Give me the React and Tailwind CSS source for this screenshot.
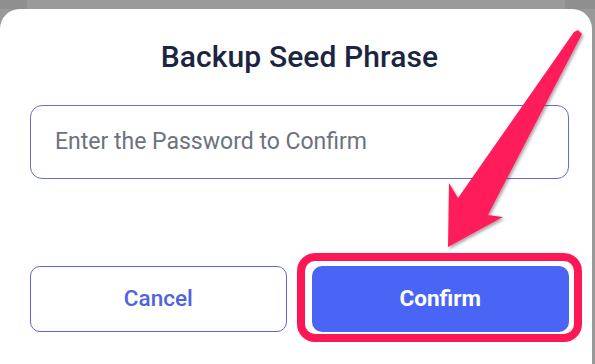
import React from "react";

export default function App() {
  return (
    <div className="relative w-[595px] h-[364px] overflow-hidden bg-[#999999]" style={{ fontFamily: "Roboto, 'Liberation Sans', sans-serif" }}>
      <div className="flex h-[9px]">
        <div className="w-[27px] bg-[#8f8f8f]" />
        <div className="flex-1 bg-[#9a9a9a]" />
        <div className="w-[30px] bg-[#8f8f8f]" />
      </div>
      <div className="w-[592px] h-[355px] bg-white rounded-t-[20px] pl-[30px] pr-[23px] flex flex-col">
        <h1 className="text-center text-[30px] font-medium text-[#1b2541] mt-[28px] leading-[40px] tracking-[0.1px]">
          Backup Seed Phrase
        </h1>
        <div className="mt-[28px] h-[74px] border border-[#666dd0] rounded-[12px] flex items-center pl-[24px]">
          <span className="text-[23px] text-[#6b7280]">Enter the Password to Confirm</span>
        </div>
        <div className="mt-[87px] flex gap-[25px]">
          <button className="w-[257px] h-[66px] border border-[#5b68d8] rounded-[10px] text-[22.5px] font-medium text-[#4d62e4]">
            Cancel
          </button>
          <div className="relative w-[258px] h-[66px]">
            <button className="w-full h-full rounded-[10px] bg-[#4a64f6] text-white text-[22.5px] font-bold">
              Confirm
            </button>
            <div className="absolute top-[-13px] bottom-[-10px] left-[-15px] right-[-13px] border-[8px] border-[#ff1654] rounded-[18px]" />
          </div>
        </div>
      </div>
      <svg className="absolute left-0 top-0" width="595" height="364" viewBox="0 0 595 364">
        <defs>
          <filter id="sh" x="-20%" y="-20%" width="140%" height="140%">
            <feDropShadow dx="1.5" dy="2" stdDeviation="1.5" floodColor="#000" floodOpacity="0.35" />
          </filter>
        </defs>
        <polygon
          points="574,32 578,30 582,34 488,215 503,217 448,247 449,183 458,198"
          fill="#ff1f5a"
          filter="url(#sh)"
        />
      </svg>
    </div>
  );
}
